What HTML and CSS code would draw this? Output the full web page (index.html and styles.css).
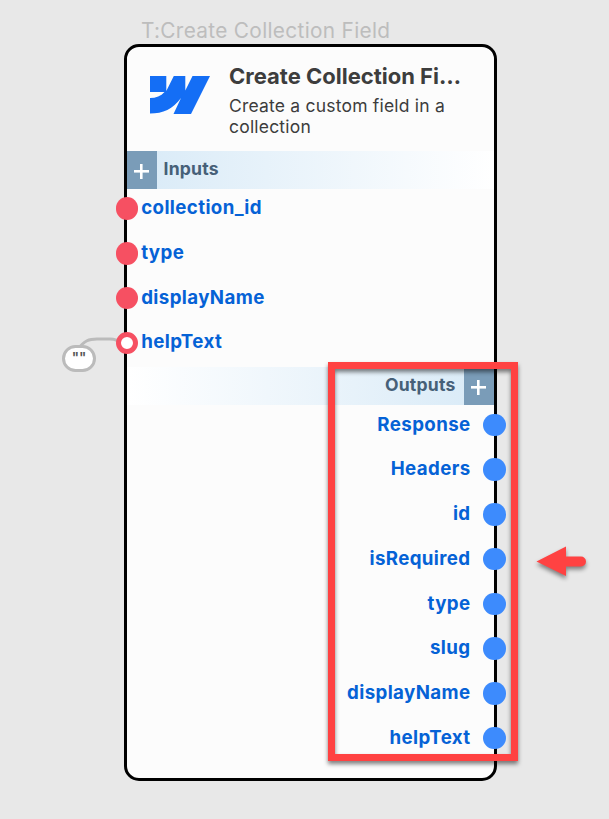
FILE: index.html
```html
<!DOCTYPE html>
<html lang="en">
<head>
<meta charset="utf-8">
<title>Create Collection Field</title>
<link rel="stylesheet" href="styles.css">
</head>
<body>
<main class="canvas">
  <div class="node-name"><span>T:Create Collection Field</span></div>
  <section class="node">
    <header class="node-header">
      <svg class="logo" viewBox="0 0 60 38"><path fill="#146ef5" d="M0 0H16.300V15L23.800 0H35.300V14.500L42.500 0H60L41 38H23.500L31 22C23 33 13 37.500 0 37.500V22C6 22 11 20 14.500 16H0Z"/></svg>
      <div class="heading">
        <h1>Create Collection Fi…</h1>
        <p>Create a custom field in a<br>collection</p>
      </div>
    </header>
    <div class="band inputs-band"><button class="add" aria-label="Add input"></button><span>Inputs</span></div>
    <ul class="ports inputs">
      <li><i class="dot"></i><span>collection_id</span></li>
      <li><i class="dot"></i><span>type</span></li>
      <li><i class="dot"></i><span>displayName</span></li>
      <li><i class="dot hollow"></i><span>helpText</span></li>
    </ul>
    <div class="band outputs-band"><span>Outputs</span><button class="add" aria-label="Add output"></button></div>
    <ul class="ports outputs">
      <li><span>Response</span><i class="dot"></i></li>
      <li><span>Headers</span><i class="dot"></i></li>
      <li><span>id</span><i class="dot"></i></li>
      <li><span>isRequired</span><i class="dot"></i></li>
      <li><span>type</span><i class="dot"></i></li>
      <li><span>slug</span><i class="dot"></i></li>
      <li><span>displayName</span><i class="dot"></i></li>
      <li><span>helpText</span><i class="dot"></i></li>
    </ul>
  </section>
  <svg class="wire" viewBox="0 0 50 20"><path d="M2 14C10 4 14 3 22 3H35C40 3 42 4 46 6" fill="none" stroke="#bbb" stroke-width="3"/></svg>
  <div class="value">""</div>
  <div class="highlight"></div>
  <svg class="arrow" viewBox="0 0 60 46"><path fill="#ff4242" d="M6.500 20.500L36 5.500V15.500H51A5 5 0 0 1 51 25.500H36V35Z"/></svg>
</main>
</body>
</html>
```
FILE: styles.css
```css
* { box-sizing: border-box; }
body { margin: 0; background: #e8e8e8; font-family: Inter, "Liberation Sans", sans-serif; }
.canvas { position: relative; width: 609px; height: 819px; overflow: hidden; padding-left: 123.500px; }
.node-name { height: 43.500px; padding: 18px 0 0 17.500px; font-size: 20.800px; line-height: 26px; letter-spacing: .32px; color: #bdbdbd; white-space: nowrap; }
.node { width: 373px; height: 737px; border: 3px solid #000; border-radius: 15px; background: #fcfcfc; }
.node-header { display: flex; height: 104.500px; padding: 16px 0 0 23px; }
.logo { flex: none; width: 60px; height: 38px; margin-top: 13.500px; }
.heading { margin-left: 19.500px; white-space: nowrap; color: #3d3d3d; }
h1 { margin: 0; font-size: 22px; line-height: 27px; font-weight: 700; }
p { margin: 5px 0 0; font-size: 17.500px; line-height: 21.500px; letter-spacing: .2px; }
.band { display: flex; height: 37.700px; color: #466078; font-size: 17.600px; font-weight: 700; line-height: 35px; letter-spacing: .2px; }
.inputs-band { background: linear-gradient(90deg, #d8eaf7, #fff); }
.outputs-band { justify-content: flex-end; margin-top: -.400px; background: linear-gradient(270deg, #d8eaf7, #fff); }
.inputs-band span { margin-left: 7px; }
.outputs-band span { margin-right: 8px; }
.add { width: 30px; padding: 0; border: 0; background: linear-gradient(#fff, #fff) 50% 19px/15px 2.600px no-repeat, linear-gradient(#fff, #fff) 50% 12.800px/2.600px 15px no-repeat, #7a9cb8; }
.ports { margin: 0; padding: 0; list-style: none; }
.ports li { display: flex; align-items: center; height: 44.750px; padding-bottom: 5px; color: #0562d6; font-size: 18.700px; font-weight: 700; letter-spacing: .38px; }
.ports span { position: relative; top: -1px; }
.dot { flex: none; width: 22.500px; height: 22.500px; border-radius: 50%; z-index: 1; }
.inputs .dot { margin: 0 2.800px 0 -10.600px; background: #f65062; }
.inputs .hollow { border: 5px solid #f65062; background: #fff; }
.outputs li { justify-content: flex-end; padding-bottom: 5px; }
.outputs .dot { margin: 0 -12px 0 12.500px; background: #3d8bfd; }
.outputs span { top: -.700px; }
.wire { position: absolute; left: 75px; top: 336px; width: 50px; height: 20px; clip-path: inset(0 8px 0 0); }
.value { position: absolute; left: 62px; top: 345px; width: 34px; height: 27px; border: 3px solid #bbb; border-radius: 14px; background: #fff; color: #555; font-size: 14px; font-weight: 600; line-height: 20px; text-align: center; }
.highlight { position: absolute; left: 328px; top: 362px; width: 190px; height: 399px; border: 7px solid #ff4242; filter: drop-shadow(0 3px 2px rgba(0,0,0,.5)); z-index: 3; }
.arrow { position: absolute; left: 530px; top: 541px; width: 60px; height: 46px; overflow: visible; filter: drop-shadow(0 3px 2px rgba(0,0,0,.45)); }
```
